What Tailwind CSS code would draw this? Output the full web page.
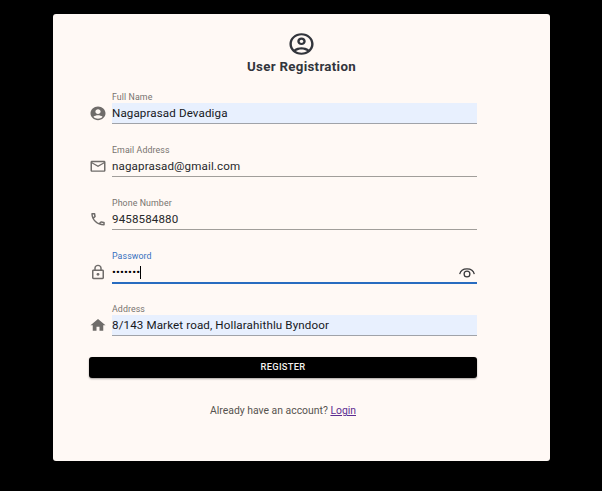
<!DOCTYPE html>
<html lang="en">
<head>
<meta charset="utf-8">
<title>User Registration</title>
<script src="https://cdn.jsdelivr.net/npm/@tailwindcss/browser@4"></script>
</head>
<body class="h-[491px] overflow-hidden bg-black pt-[14px] pl-[53px] font-[Roboto,sans-serif]">
<main class="flex h-[447px] w-[497px] flex-col rounded-[3px] bg-[#fff9f5] pt-[17px] pl-[36px]">
  <header class="flex w-[425px] flex-col items-center text-[#32353c]">
    <svg class="h-[26px] w-[29px]" viewBox="0 0 24 24" preserveAspectRatio="none" fill="currentColor"><path d="M12 2C6.48 2 2 6.48 2 12s4.48 10 10 10 10-4.48 10-10S17.52 2 12 2zM7.35 18.5C8.66 17.56 10.26 17 12 17s3.34.56 4.65 1.5C15.34 19.44 13.74 20 12 20s-3.34-.56-4.65-1.5zm10.79-1.38C16.45 15.8 14.32 15 12 15s-4.45.8-6.14 2.12C4.7 15.73 4 13.95 4 12c0-4.42 3.58-8 8-8s8 3.58 8 8c0 1.95-.7 3.73-1.86 5.12zM12 6c-1.93 0-3.5 1.57-3.5 3.5S10.07 13 12 13s3.5-1.57 3.5-3.5S13.93 6 12 6zm0 5c-.83 0-1.5-.67-1.5-1.5S11.17 8 12 8s1.5.67 1.5 1.5S12.83 11 12 11z"/></svg>
    <h1 class="mt-px text-[13.3px] leading-[18px] font-bold tracking-[0.3px] whitespace-nowrap">User Registration</h1>
  </header>
  <form class="mt-[14px] w-[388px] text-[11.6px] tracking-[0.12px] text-[#27282b]">
    <div class="flex h-[53px] gap-[5.5px]">
      <svg class="-ml-[0.5px] mt-[15px] h-[16.5px] w-[18px] shrink-0 text-[#6f6c6a]" viewBox="0 0 24 24" preserveAspectRatio="none" fill="currentColor"><path d="M12 2C6.48 2 2 6.48 2 12s4.48 10 10 10 10-4.48 10-10S17.52 2 12 2zm0 4c1.93 0 3.5 1.57 3.5 3.5S13.93 13 12 13s-3.500-1.570-3.500-3.500S10.070 6 12 6zm0 14c-2.030 0-4.430-.820-6.140-2.880C7.550 15.800 9.680 15 12 15s4.450.800 6.140 2.120C16.430 19.180 14.030 20 12 20z"/></svg>
      <div class="w-[365px]"><div class="h-[13px] text-[8.8px] leading-[14px] tracking-[0.1px] text-[#77736f]">Full Name</div><div class="h-[21px] border-b border-[#a0a3a9] bg-[#e8f0fe] leading-[20px] text-[#16181d]">Nagaprasad Devadiga</div></div>
    </div>
    <div class="flex h-[53px] gap-[5.5px]">
      <svg class="-ml-[0.5px] mt-[15px] h-[16.5px] w-[18px] shrink-0 text-[#6f6c6a]" viewBox="0 0 24 24" preserveAspectRatio="none" fill="currentColor"><path d="M22 6c0-1.100-.900-2-2-2H4c-1.100 0-2 .900-2 2v12c0 1.100.900 2 2 2h16c1.100 0 2-.900 2-2V6zm-2 0-8 5-8-5h16zm0 12H4V8l8 5 8-5v10z"/></svg>
      <div class="w-[365px]"><div class="h-[13px] text-[8.8px] leading-[14px] tracking-[0.1px] text-[#77736f]">Email Address</div><div class="h-[21px] border-b border-[#a19e9a] leading-[20px]">nagaprasad@gmail.com</div></div>
    </div>
    <div class="flex h-[53px] gap-[5.5px]">
      <svg class="-ml-[0.5px] mt-[15px] h-[16.5px] w-[18px] shrink-0 text-[#6f6c6a]" viewBox="0 0 24 24" preserveAspectRatio="none" fill="currentColor"><path d="M6.540 5c.060.890.210 1.760.450 2.590l-1.200 1.200c-.410-1.200-.670-2.470-.760-3.790h1.510m9.860 12.020c.850.240 1.720.390 2.600.450v1.490c-1.320-.090-2.590-.350-3.800-.750l1.200-1.190M7.500 3H4c-.550 0-1 .450-1 1 0 9.390 7.610 17 17 17 .550 0 1-.450 1-1v-3.490c0-.550-.450-1-1-1-1.240 0-2.450-.200-3.570-.570-.360-.110-.740-.030-1.020.240l-2.200 2.200c-2.830-1.450-5.150-3.760-6.590-6.590l2.200-2.200c.280-.280.360-.670.250-1.020C8.700 6.450 8.500 5.250 8.500 4c0-.550-.450-1-1-1z"/></svg>
      <div class="w-[365px]"><div class="h-[13px] text-[8.8px] leading-[14px] tracking-[0.1px] text-[#77736f]">Phone Number</div><div class="h-[21px] border-b border-[#a19e9a] leading-[20px]">9458584880</div></div>
    </div>
    <div class="flex h-[53px] gap-[5.5px]">
      <svg class="-ml-[0.5px] mt-[15px] h-[16.5px] w-[18px] shrink-0 text-[#6f6c6a]" viewBox="0 0 24 24" preserveAspectRatio="none" fill="currentColor"><path d="M18 8h-1V6c0-2.760-2.240-5-5-5S7 3.240 7 6v2H6c-1.100 0-2 .900-2 2v10c0 1.100.900 2 2 2h12c1.100 0 2-.900 2-2V10c0-1.100-.900-2-2-2zM9 6c0-1.660 1.340-3 3-3s3 1.340 3 3v2H9V6zm9 14H6V10h12v10zm-6-3c1.100 0 2-.900 2-2s-.900-2-2-2-2 .900-2 2 .900 2 2 2z"/></svg>
      <div class="w-[365px]"><div class="h-[13px] text-[8.8px] leading-[14px] tracking-[0.1px] text-[#3670bf]">Password</div><div class="flex h-[22px] items-center border-b-2 border-[#286cc0]"><span class="text-[11.5px] leading-[20px] tracking-[0.15px] text-black">•••••••</span><span class="h-[13px] w-px bg-black"></span>
        <svg class="mt-[2px] mr-[2px] ml-auto h-[10px] w-[16px]" viewBox="0 0 16 10" fill="none" stroke="#38383a" stroke-width="1.250"><path d="M.7 6.200C1.400 3 4.300.9 8 .9s6.600 2.100 7.300 5.300"/><circle cx="8" cy="6" r="2.900"/></svg></div></div>
    </div>
    <div class="flex h-[53px] gap-[5.5px]">
      <svg class="-ml-[0.5px] mt-[15px] h-[16.5px] w-[18px] shrink-0 text-[#6f6c6a]" viewBox="0 0 24 24" preserveAspectRatio="none" fill="currentColor"><path d="M10 20v-6h4v6h5v-8h3L12 3 2 12h3v8z"/></svg>
      <div class="w-[365px]"><div class="h-[13px] text-[8.8px] leading-[14px] tracking-[0.1px] text-[#77736f]">Address</div><div class="h-[21px] border-b border-[#a0a3a9] bg-[#e8f0fe] leading-[20px] text-[#16181d]">8/143 Market road, Hollarahithlu Byndoor</div></div>
    </div>
    <button type="button" class="mt-[2px] block h-[21px] w-full rounded-[3px] bg-black pb-px text-center text-[9.3px] leading-[20px] font-medium tracking-[0.3px] text-[#f4f1ee] shadow-[0_1px_2px_rgba(0,0,0,0.35)]">REGISTER</button>
  </form>
  <p class="mt-[24px] w-[388px] text-center text-[10.4px] leading-[18px] whitespace-nowrap text-[#56534f]">Already have an account? <a href="#" class="text-[#5c2d91] underline">Login</a></p>
</main>
</body>
</html>
